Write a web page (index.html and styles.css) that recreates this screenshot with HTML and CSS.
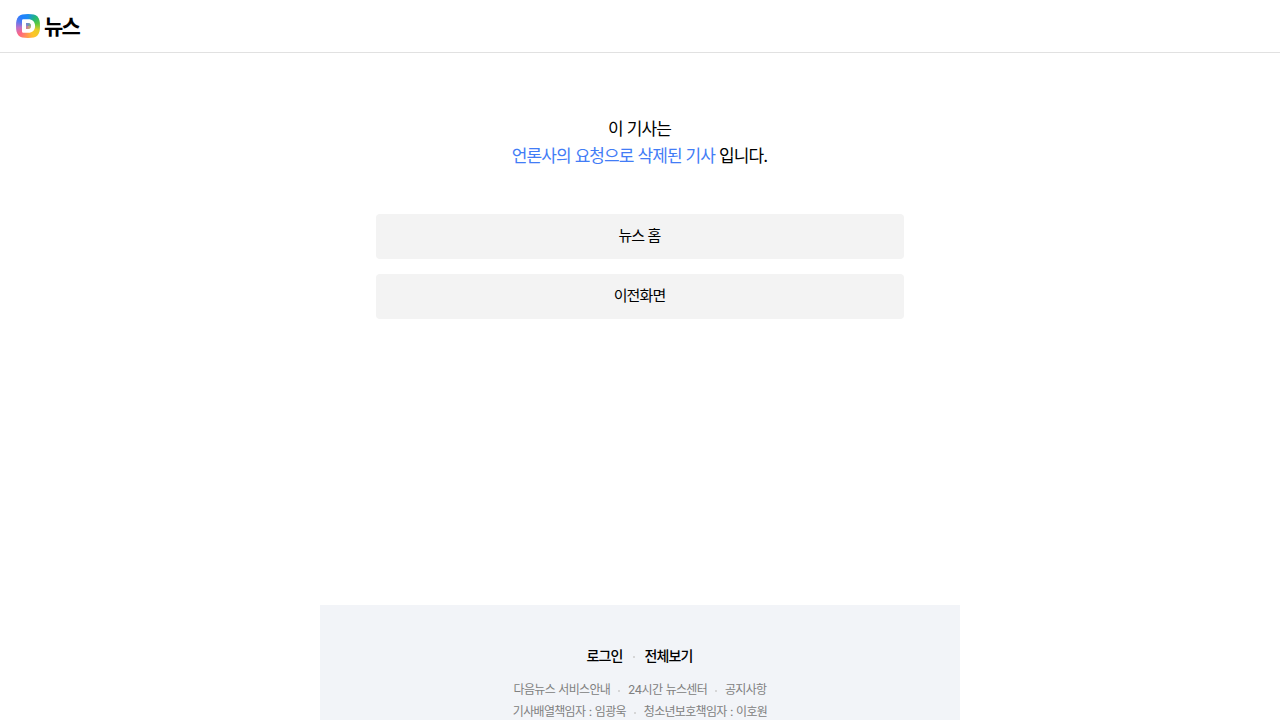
FILE: index.html
```
<!DOCTYPE html>
<html lang="ko">
<head>
    <meta charset="UTF-8">
    <title>다음뉴스</title>
    <link rel="stylesheet" href="styles.css">
</head>
<body>
<header class="head">
    <a href="#" class="logo">
        <svg class="logo_daum" viewBox="0 0 24 24">
            <defs>
                <clipPath id="shape">
                    <path d="M12 0C21.2 0 24 2.8 24 12S21.2 24 12 24 0 21.2 0 12 2.8 0 12 0Z"/>
                </clipPath>
            </defs>
            <foreignObject width="24" height="24" clip-path="url(#shape)">
                <div class="logo_color"></div>
            </foreignObject>
            <path fill="#fff" fill-rule="evenodd" d="M6 6.5Q6 5.2 7.3 5.2H12.2C16.4 5.2 19.1 7.9 19.1 12S16.4 18.8 12.2 18.8H7.3Q6 18.8 6 17.5ZM10 9V15H12.1C13.9 15 15 13.8 15 12S13.9 9 12.1 9Z"/>
            <path fill="#a98fb0" opacity=".6" d="M10 9V15H12.1C13.9 15 15 13.8 15 12S13.9 9 12.1 9Z"/>
        </svg>
        <span class="logo_news">뉴스</span>
    </a>
</header>
<main class="content">
    <p class="desc">이 기사는<br><em>언론사의 요청으로 삭제된 기사</em> 입니다.</p>
    <div class="btns">
        <a href="#">뉴스 홈</a>
        <a href="#">이전화면</a>
    </div>
</main>
<footer class="foot">
    <ul class="service">
        <li><a href="#">로그인</a></li>
        <li><a href="#">전체보기</a></li>
    </ul>
    <ul class="info">
        <li><a href="#">다음뉴스 서비스안내</a></li>
        <li><a href="#">24시간 뉴스센터</a></li>
        <li><a href="#">공지사항</a></li>
    </ul>
    <ul class="info">
        <li>기사배열책임자 : 임광욱</li>
        <li>청소년보호책임자 : 이호원</li>
    </ul>
</footer>
</body>
</html>
```
FILE: styles.css
```
* {
    margin: 0;
    padding: 0;
    box-sizing: border-box;
}

body {
    height: 720px;
    overflow: hidden;
    background-color: #fff;
    color: #000;
    font-family: Inter, "Noto Sans CJK KR", sans-serif;
    letter-spacing: -0.056em;
}

ul {
    list-style: none;
}

a {
    color: inherit;
    text-decoration: none;
}

.head {
    height: 53px;
    padding: 14px 16px;
    border-bottom: 1px solid #e1e1e1;
}

.logo {
    display: flex;
    height: 24px;
}

.logo_daum {
    width: 24px;
    height: 24px;
}

.logo_color {
    width: 24px;
    height: 24px;
    background: conic-gradient(from 0deg, #1d8cf0, #20b67c 40deg, #58c840 75deg, #e8cc28 115deg, #ffc429 150deg, #ff9a50 185deg, #ff6680 225deg, #c070c8 260deg, #5878f0 295deg, #2080ff 325deg, #1d8cf0);
}

.logo_news {
    margin-left: 4px;
    font-size: 21px;
    font-weight: 700;
    line-height: 26px;
    letter-spacing: -0.09em;
}

.content {
    width: 528px;
    height: 552px;
    margin: 0 auto;
    padding-top: 63px;
}

.desc {
    padding-right: 1px;
    font-size: 17px;
    line-height: 27px;
    text-align: center;
}

.desc em {
    color: #427cf6;
    font-style: normal;
}

.btns {
    display: flex;
    flex-direction: column;
    gap: 15px;
    margin-top: 44px;
}

.btns a {
    height: 45px;
    padding-right: 1px;
    border-radius: 4px;
    background-color: #f3f3f3;
    font-size: 15px;
    line-height: 43px;
    text-align: center;
}

.foot {
    width: 640px;
    height: 115px;
    margin: 0 auto;
    padding-top: 40px;
    background-color: #f2f4f8;
}

.foot ul {
    display: flex;
    justify-content: center;
}

.foot li {
    display: flex;
    align-items: center;
}

.foot li + li::before {
    content: "";
    width: 2px;
    height: 2px;
    margin: 2px 8px 0;
    border-radius: 50%;
    background-color: #ccc;
}

.foot .service {
    margin-bottom: 12px;
    padding-right: 1px;
    font-size: 14px;
    font-weight: 500;
    line-height: 22px;
}

.foot .service li + li::before {
    margin: 2px 10px 0;
}

.info {
    color: #808080;
    font-size: 12px;
    line-height: 22px;
    letter-spacing: -0.058em;
    word-spacing: 0.7px;
}
```
